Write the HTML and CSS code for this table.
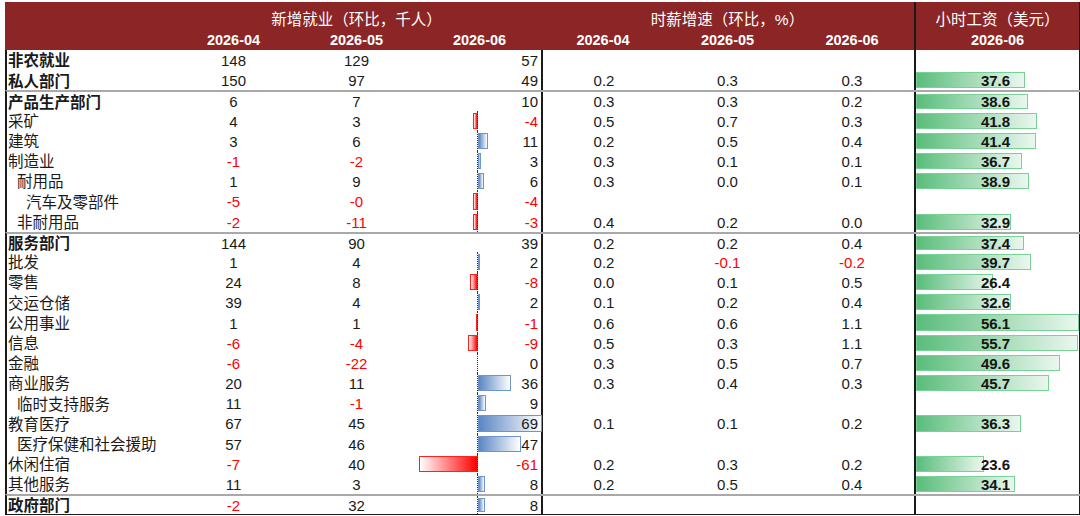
FILE: index.html
```html
<!DOCTYPE html>
<html lang="zh">
<head>
<meta charset="utf-8">
<title>就业与工资</title>
<link rel="stylesheet" href="styles.css">
</head>
<body>
<div class="table">
  <div class="head">
    <div class="htitle h-emp">新增就业（环比，千人）</div>
    <div class="htitle h-wg">时薪增速（环比，%）</div>
    <div class="htitle h-hw">小时工资（美元）</div>
    <div class="hyear c2">2026-04</div>
    <div class="hyear c3">2026-05</div>
    <div class="hyear c4">2026-06</div>
    <div class="hyear c5">2026-04</div>
    <div class="hyear c6">2026-05</div>
    <div class="hyear c7">2026-06</div>
    <div class="hyear c8 hw-year">2026-06</div>
  </div>

  <div class="row"><div class="lbl b">非农就业</div><div class="n">148</div><div class="n">129</div><div class="n3">57</div><div class="w wl"></div><div class="w"></div><div class="w"></div><div class="hw"></div></div>
  <div class="row"><div class="lbl b">私人部门</div><div class="n">150</div><div class="n">97</div><div class="n3">49</div><div class="w wl">0.2</div><div class="w">0.3</div><div class="w">0.3</div><div class="hw"><span class="gbar" style="width:109px"></span><span class="hv">37.6</span></div></div>

  <div class="row sep"><div class="lbl b">产品生产部门</div><div class="n">6</div><div class="n">7</div><div class="n3">10</div><div class="w wl">0.3</div><div class="w">0.3</div><div class="w">0.2</div><div class="hw"><span class="gbar" style="width:112px"></span><span class="hv">38.6</span></div></div>
  <div class="row"><div class="lbl">采矿</div><div class="n">4</div><div class="n">3</div><div class="n3 axis"><span class="bar neg" style="width:5px"></span><span class="v r">-4</span></div><div class="w wl">0.5</div><div class="w">0.7</div><div class="w">0.3</div><div class="hw"><span class="gbar" style="width:121px"></span><span class="hv">41.8</span></div></div>
  <div class="row"><div class="lbl">建筑</div><div class="n">3</div><div class="n">6</div><div class="n3 axis"><span class="bar pos" style="width:10px"></span><span class="v">11</span></div><div class="w wl">0.2</div><div class="w">0.5</div><div class="w">0.4</div><div class="hw"><span class="gbar" style="width:120px"></span><span class="hv">41.4</span></div></div>
  <div class="row"><div class="lbl">制造业</div><div class="n r">-1</div><div class="n r">-2</div><div class="n3 axis"><span class="bar pos" style="width:3px"></span><span class="v">3</span></div><div class="w wl">0.3</div><div class="w">0.1</div><div class="w">0.1</div><div class="hw"><span class="gbar" style="width:106px"></span><span class="hv">36.7</span></div></div>
  <div class="row"><div class="lbl i1">耐用品</div><div class="n">1</div><div class="n">9</div><div class="n3 axis"><span class="bar pos" style="width:6px"></span><span class="v">6</span></div><div class="w wl">0.3</div><div class="w">0.0</div><div class="w">0.1</div><div class="hw"><span class="gbar" style="width:113px"></span><span class="hv">38.9</span></div></div>
  <div class="row"><div class="lbl i2">汽车及零部件</div><div class="n r">-5</div><div class="n r">-0</div><div class="n3 axis"><span class="bar neg" style="width:5px"></span><span class="v r">-4</span></div><div class="w wl"></div><div class="w"></div><div class="w"></div><div class="hw"></div></div>
  <div class="row"><div class="lbl i1">非耐用品</div><div class="n r">-2</div><div class="n r">-11</div><div class="n3 axis"><span class="bar neg" style="width:5px"></span><span class="v r">-3</span></div><div class="w wl">0.4</div><div class="w">0.2</div><div class="w">0.0</div><div class="hw"><span class="gbar" style="width:95px"></span><span class="hv">32.9</span></div></div>

  <div class="row sep"><div class="lbl b">服务部门</div><div class="n">144</div><div class="n">90</div><div class="n3">39</div><div class="w wl">0.2</div><div class="w">0.2</div><div class="w">0.4</div><div class="hw"><span class="gbar" style="width:108px"></span><span class="hv">37.4</span></div></div>
  <div class="row"><div class="lbl">批发</div><div class="n">1</div><div class="n">4</div><div class="n3 axis"><span class="bar pos" style="width:2px"></span><span class="v">2</span></div><div class="w wl">0.2</div><div class="w r">-0.1</div><div class="w r">-0.2</div><div class="hw"><span class="gbar" style="width:115px"></span><span class="hv">39.7</span></div></div>
  <div class="row"><div class="lbl">零售</div><div class="n">24</div><div class="n">8</div><div class="n3 axis"><span class="bar neg" style="width:8px"></span><span class="v r">-8</span></div><div class="w wl">0.0</div><div class="w">0.1</div><div class="w">0.5</div><div class="hw"><span class="gbar" style="width:77px"></span><span class="hv">26.4</span></div></div>
  <div class="row"><div class="lbl">交运仓储</div><div class="n">39</div><div class="n">4</div><div class="n3 axis"><span class="bar pos" style="width:2px"></span><span class="v">2</span></div><div class="w wl">0.1</div><div class="w">0.2</div><div class="w">0.4</div><div class="hw"><span class="gbar" style="width:95px"></span><span class="hv">32.6</span></div></div>
  <div class="row"><div class="lbl">公用事业</div><div class="n">1</div><div class="n">1</div><div class="n3 axis"><span class="bar neg" style="width:2px"></span><span class="v r">-1</span></div><div class="w wl">0.6</div><div class="w">0.6</div><div class="w">1.1</div><div class="hw"><span class="gbar" style="width:163px"></span><span class="hv">56.1</span></div></div>
  <div class="row"><div class="lbl">信息</div><div class="n r">-6</div><div class="n r">-4</div><div class="n3 axis"><span class="bar neg" style="width:10px"></span><span class="v r">-9</span></div><div class="w wl">0.5</div><div class="w">0.3</div><div class="w">1.1</div><div class="hw"><span class="gbar" style="width:162px"></span><span class="hv">55.7</span></div></div>
  <div class="row"><div class="lbl">金融</div><div class="n r">-6</div><div class="n r">-22</div><div class="n3 axis"><span class="v">0</span></div><div class="w wl">0.3</div><div class="w">0.5</div><div class="w">0.7</div><div class="hw"><span class="gbar" style="width:144px"></span><span class="hv">49.6</span></div></div>
  <div class="row"><div class="lbl">商业服务</div><div class="n">20</div><div class="n">11</div><div class="n3 axis"><span class="bar pos" style="width:33px"></span><span class="v">36</span></div><div class="w wl">0.3</div><div class="w">0.4</div><div class="w">0.3</div><div class="hw"><span class="gbar" style="width:133px"></span><span class="hv">45.7</span></div></div>
  <div class="row"><div class="lbl i1">临时支持服务</div><div class="n">11</div><div class="n r">-1</div><div class="n3 axis"><span class="bar pos" style="width:8px"></span><span class="v">9</span></div><div class="w wl"></div><div class="w"></div><div class="w"></div><div class="hw"></div></div>
  <div class="row"><div class="lbl">教育医疗</div><div class="n">67</div><div class="n">45</div><div class="n3 axis"><span class="bar pos" style="width:64px"></span><span class="v">69</span></div><div class="w wl">0.1</div><div class="w">0.1</div><div class="w">0.2</div><div class="hw"><span class="gbar" style="width:105px"></span><span class="hv">36.3</span></div></div>
  <div class="row"><div class="lbl i1">医疗保健和社会援助</div><div class="n">57</div><div class="n">46</div><div class="n3 axis"><span class="bar pos" style="width:43px"></span><span class="v">47</span></div><div class="w wl"></div><div class="w"></div><div class="w"></div><div class="hw"></div></div>
  <div class="row"><div class="lbl">休闲住宿</div><div class="n r">-7</div><div class="n">40</div><div class="n3 axis"><span class="bar neg" style="width:59px"></span><span class="v r">-61</span></div><div class="w wl">0.2</div><div class="w">0.3</div><div class="w">0.2</div><div class="hw"><span class="gbar" style="width:68px"></span><span class="hv">23.6</span></div></div>
  <div class="row"><div class="lbl">其他服务</div><div class="n">11</div><div class="n">3</div><div class="n3 axis"><span class="bar pos" style="width:7px"></span><span class="v">8</span></div><div class="w wl">0.2</div><div class="w">0.5</div><div class="w">0.4</div><div class="hw"><span class="gbar" style="width:99px"></span><span class="hv">34.1</span></div></div>

  <div class="row sep last"><div class="lbl b">政府部门</div><div class="n r">-2</div><div class="n">32</div><div class="n3 axis"><span class="bar pos" style="width:7px"></span><span class="v">8</span></div><div class="w wl"></div><div class="w"></div><div class="w"></div><div class="hw"></div></div>
</div>
</body>
</html>
```

FILE: styles.css
```css
* { box-sizing: border-box; }
html, body { margin: 0; padding: 0; background: #ffffff; }
body {
  font-family: "Liberation Sans", "Noto Sans CJK SC", sans-serif;
  color: #1a1a1a;
  font-size: 15px;
}
.table {
  margin: 2px 0 0 5px;
  width: 1075px;
}
.head {
  display: grid;
  grid-template-columns: 167px 123px 123px 123px 124px 125px 124px 166px;
  grid-template-rows: 28px 20px;
  background: #8b2526;
  color: #ffffff;
}
.htitle {
  grid-row: 1;
  display: flex;
  align-items: center;
  justify-content: center;
  font-size: 15.5px;
  padding-top: 4px;
}
.h-emp { grid-column: 2 / 5; }
.h-wg { grid-column: 5 / 8; }
.h-hw { grid-column: 8 / 9; border-left: 2px solid #1a1a1a; border-right: 1px solid #1a1a1a; }
.hyear {
  grid-row: 2;
  font-weight: bold;
  font-size: 14.5px;
  display: flex;
  align-items: center;
  justify-content: center;
}
.c2 { grid-column: 2; }
.c3 { grid-column: 3; }
.c4 { grid-column: 4; }
.c5 { grid-column: 5; }
.c6 { grid-column: 6; }
.c7 { grid-column: 7; }
.c8 { grid-column: 8; }
.hw-year { border-left: 2px solid #1a1a1a; border-right: 1px solid #1a1a1a; }

.row {
  display: grid;
  grid-template-columns: 165px 123px 123px 123px 124px 125px 124px 166px;
  height: 20.2px;
  border-left: 2px solid #1a1a1a;
}
.row.sep { border-top: 2px solid #a9a9a9; }
.row.last { border-bottom: 1px solid #1a1a1a; height: 21.2px; }
.row > div {
  display: flex;
  align-items: center;
  white-space: nowrap;
  line-height: 1;
}
.lbl {
  font-size: 15.5px;
  padding-left: 1px;
  padding-top: 2px;
}
.lbl.b { font-weight: bold; }
.lbl.i1 { padding-left: 10px; }
.lbl.i2 { padding-left: 19px; }
.n { justify-content: center; padding-top: 1px; }
.n3 {
  justify-content: flex-end;
  padding-right: 3px;
  padding-top: 1px;
  position: relative;
}
.w { justify-content: center; padding-top: 1px; }
.wl { border-left: 2px solid #1a1a1a; }
.hw {
  border-left: 2px solid #1a1a1a;
  border-right: 1px solid #1a1a1a;
  position: relative;
  justify-content: center;
  padding-top: 1px;
}
.r { color: #ff0000; }
.v { position: relative; z-index: 2; }

.axis::before {
  content: "";
  position: absolute;
  left: 59px;
  top: 0;
  bottom: 0;
  border-left: 1px dotted #333333;
  z-index: 1;
}
.bar {
  position: absolute;
  top: 2px;
  bottom: 2px;
}
.bar.pos {
  left: 60px;
  background: linear-gradient(to right, #5b86c4, #ffffff);
  border: 1px solid #6e94cc;
}
.bar.neg {
  right: 63px;
  background: linear-gradient(to right, #ffffff, #ff0000);
  border: 1px solid #ff2020;
}
.gbar {
  position: absolute;
  left: 0;
  top: 2px;
  bottom: 2px;
  background: linear-gradient(to right, #5abd7b, #eaf7ee);
  border: 1px solid #78d296;
}
.hv {
  position: relative;
  z-index: 2;
  font-weight: bold;
  color: #141414;
  margin-right: 4px;
}
```
